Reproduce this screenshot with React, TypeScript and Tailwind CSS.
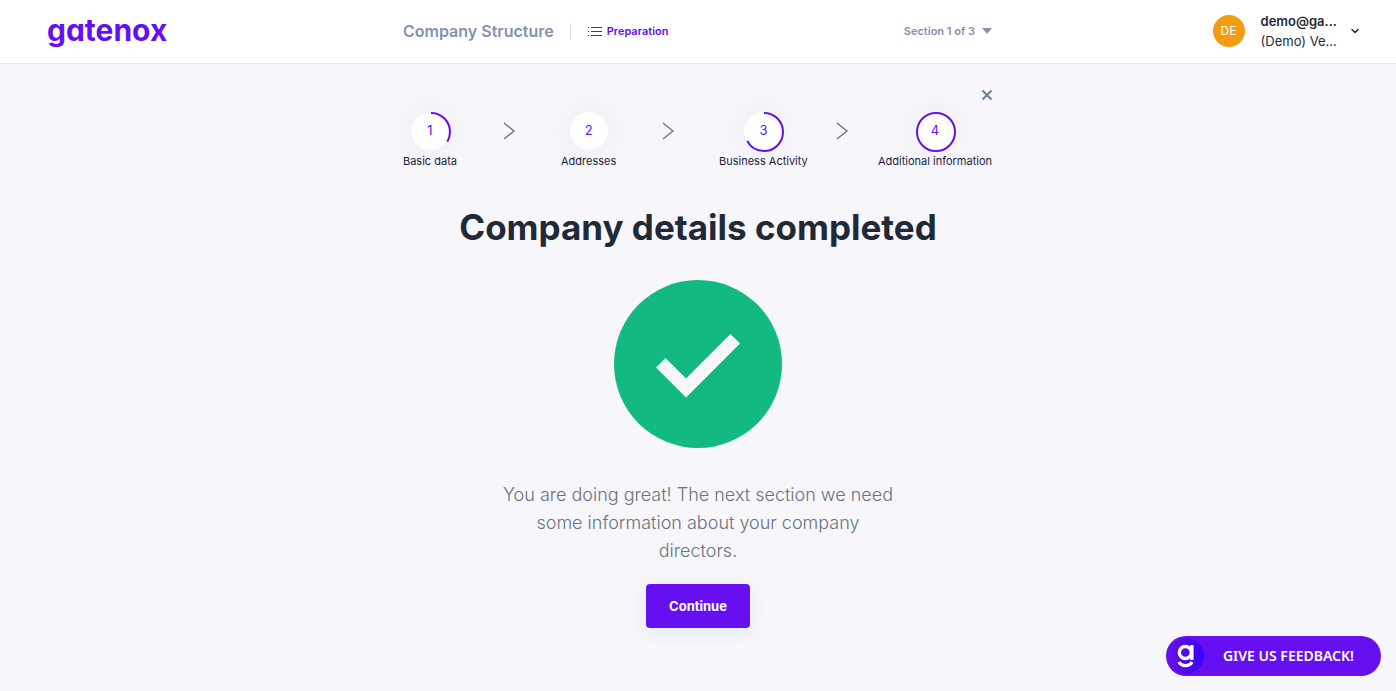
import { ChevronDown } from "lucide-react";

const RING_LENGTH = 2 * Math.PI * 19;

const steps = [
  { number: 1, label: "Basic data", progress: 1 / 3 },
  { number: 2, label: "Addresses", progress: 0 },
  { number: 3, label: "Business Activity", progress: 2 / 3 },
  { number: 4, label: "Additional information", progress: 1 },
];

function Step({ number, label, progress }: { number: number; label: string; progress: number }) {
  return (
    <a href={`#step-${number}`} className="flex flex-col items-center gap-[3px]">
      <span className="relative flex size-[38px] items-center justify-center rounded-full bg-white text-[13px] text-[#6610f2] shadow-[0_0_30px_rgba(0,0,0,0.06)]">
        {number}
        {progress > 0 && (
          <svg className="absolute top-0 left-0 size-10 max-w-none" viewBox="0 0 40 40" fill="none" aria-hidden="true">
            <circle
              cx="20"
              cy="20"
              r="19"
              stroke="#6610f2"
              strokeWidth="2"
              strokeDasharray={`${RING_LENGTH * progress} ${RING_LENGTH}`}
              transform="rotate(-90 20 20)"
            />
          </svg>
        )}
      </span>
      <span className="text-[11px] leading-4 whitespace-nowrap text-[#1e1b3a]">{label}</span>
    </a>
  );
}

function Header() {
  return (
    <header className="grid h-16 grid-cols-[1fr_minmax(0,590px)_1fr] items-center border-b border-[#e9eaf0] bg-white pb-0.5">
      <a href="#home" className="justify-self-start pb-0.5 pl-[47px] text-[30px] leading-10 font-bold text-[#6610f2] [font-feature-settings:'cv11']">
        gatenox
      </a>
      <div className="flex items-center justify-between">
        <div className="flex items-center">
          <h2 className="text-base font-semibold text-[#8492ae]">Company Structure</h2>
          <span className="mr-[17px] ml-4 h-4 w-px bg-[#dcdfe8]" />
          <a href="#preparation" className="flex items-center gap-[5px] text-[11px] leading-4 font-semibold text-[#6610f2]">
            <svg className="size-[14px]" viewBox="0 0 14 14" fill="none" stroke="#6610f2" strokeWidth="1.2" aria-hidden="true">
              <path d="M0 3.5h1.2M0 7.5h1.2M0 11.5h1.2M3 3.5h11M3 7.5h11M3 11.5h11" />
            </svg>
            Preparation
          </a>
        </div>
        <button type="button" className="flex items-center gap-[7px] pr-px text-[11px] leading-4 font-semibold text-[#8492ae]">
          Section 1 of 3
          <svg className="h-[6px] w-[10px]" viewBox="0 0 10 6" fill="currentColor" aria-hidden="true">
            <path d="M0 0h10L5 6z" />
          </svg>
        </button>
      </div>
      <button type="button" aria-label="Account menu" className="mr-[35px] flex items-center justify-self-end text-left text-[#1f2937]">
        <span className="mr-4 flex size-8 items-center justify-center rounded-full bg-[#f39c12] text-xs text-white">DE</span>
        <span className="mr-3 min-w-[76px] text-[13px] leading-5 whitespace-nowrap">
          <span className="block font-semibold">demo@ga...</span>
          <span className="block">(Demo) Ve...</span>
        </span>
        <ChevronDown className="size-3" strokeWidth={3} />
      </button>
    </header>
  );
}

export default function App() {
  return (
    <div className="min-h-screen bg-[#f6f6fb] font-['Inter',sans-serif] text-[#1f2937]">
      <Header />
      <main className="mx-auto flex max-w-[590px] flex-col items-center pb-14">
        <button type="button" aria-label="Close" className="mt-[25px] self-end text-[#7482a0]">
          <svg className="size-3" viewBox="0 0 12 12" stroke="currentColor" strokeWidth="2.2" aria-hidden="true">
            <path d="M1.5 1.5L10.5 10.5M10.5 1.5L1.5 10.5" />
          </svg>
        </button>
        <nav aria-label="Progress" className="mt-[11px] w-full">
          <ol className="grid grid-cols-[1fr_1fr_1fr_116px]">
            {steps.map((step, index) => (
              <li key={step.number} className={index < steps.length - 1 ? "flex" : "flex justify-center"}>
                <Step {...step} />
                {index < steps.length - 1 && (
                  <span className="flex h-[38px] flex-1 items-center justify-center">
                    <svg className="h-[18px] w-3" viewBox="0 0 12 18" fill="none" stroke="#64708a" strokeWidth="1.3" aria-hidden="true">
                      <path d="M1 1L11 9L1 17" />
                    </svg>
                  </span>
                )}
              </li>
            ))}
          </ol>
        </nav>
        <h1 className="mt-9 text-[35px] leading-[45px] font-bold whitespace-nowrap">Company details completed</h1>
        <svg className="mt-[30px] size-[168px]" viewBox="0 0 168 168" aria-hidden="true">
          <circle cx="84" cy="84" r="84" fill="#12b981" />
          <path d="M42 87.5L51.5 78L72 98.5L116.5 54L126 63.5L72 117.5Z" fill="#f6f6fb" />
        </svg>
        <p className="mt-[33px] max-w-[400px] text-center text-lg leading-7 font-light text-[#6b7280]">
          You are doing great! The next section we need some information about your company directors.
        </p>
        <button type="button" className="mt-[19px] h-11 rounded bg-[#6610f2] px-[23px] pt-px text-[13px] font-bold text-white shadow-[0_4px_16px_rgba(80,130,220,0.12)]">
          Continue
        </button>
      </main>
      <button type="button" className="fixed right-[15px] bottom-[15px] flex h-10 items-center gap-[18px] rounded-full bg-[#6610f2] pr-[27px] pl-[3px] font-['Noto_Sans',sans-serif] text-sm font-semibold text-white">
        <svg className="size-9" viewBox="0 0 36 36" fill="none" aria-hidden="true">
          <defs>
            <linearGradient id="badge">
              <stop offset="0" stopColor="#6610e8" />
              <stop offset="0.5" stopColor="#500ae4" />
              <stop offset="1" stopColor="#3c00ff" />
            </linearGradient>
          </defs>
          <circle cx="17" cy="18" r="18" fill="url(#badge)" />
          <g stroke="#fff" strokeWidth="3.3">
            <circle cx="16.3" cy="14.5" r="6" />
            <path d="M22.9 7V22M10 24C12.5 28.8 20.5 28.8 23 24" />
          </g>
        </svg>
        GIVE US FEEDBACK!
      </button>
    </div>
  );
}
